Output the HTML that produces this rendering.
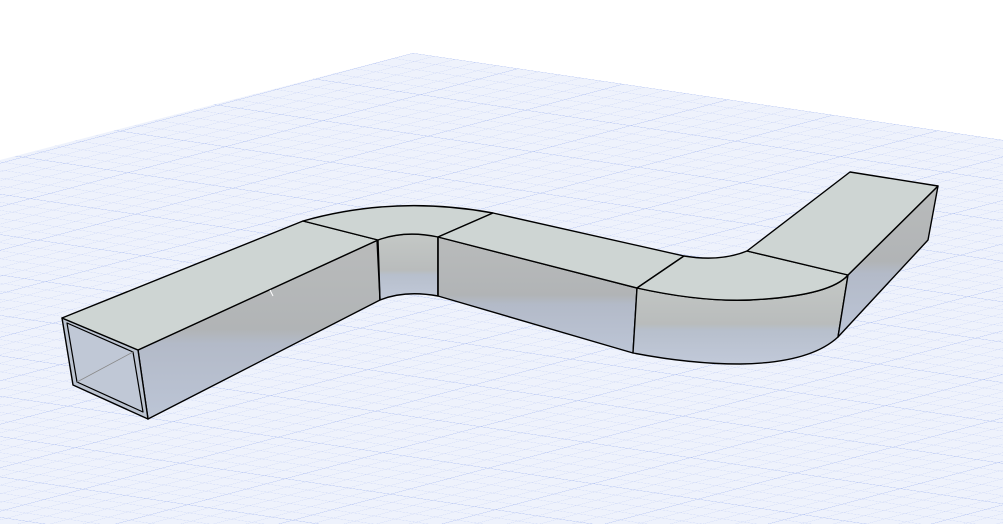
<!DOCTYPE html>
<html><head><meta charset="utf-8"><style>
html,body{margin:0;padding:0;background:#fff;overflow:hidden}
svg{display:block}
</style></head><body>
<svg width="1003" height="524" viewBox="0 0 1003 524" xmlns="http://www.w3.org/2000/svg">
<defs>
<pattern id="minor" width="10" height="10" patternUnits="userSpaceOnUse" patternTransform="matrix(2.1 0.31 -1.95 0.52 413 53)">
<rect width="10" height="10" fill="#eef2fc"/>
<path d="M0 0H10M0 0V10" stroke="#c8d3f5" stroke-width="0.6" fill="none"/>
</pattern>
<pattern id="major" width="50" height="50" patternUnits="userSpaceOnUse" patternTransform="matrix(2.1 0.31 -1.95 0.52 413 53)">
<path d="M0 0H50M0 0V50" stroke="#aabcf0" stroke-width="0.7" fill="none"/>
</pattern>
<linearGradient id="side" x1="0" y1="0" x2="0" y2="1">
<stop offset="0" stop-color="#b9bbbb"/>
<stop offset="0.5" stop-color="#b1b4b6"/>
<stop offset="0.58" stop-color="#b3bac8"/>
<stop offset="1" stop-color="#bcc5d6"/>
</linearGradient>
<linearGradient id="side2" x1="0" y1="0" x2="0" y2="1">
<stop offset="0" stop-color="#c4c8c6"/>
<stop offset="0.55" stop-color="#b9bcbc"/>
<stop offset="0.62" stop-color="#b7bfcc"/>
<stop offset="1" stop-color="#c1c9d9"/>
</linearGradient>
</defs>
<polygon points="0,160 413,53 1003,140 1003,524 0,524" fill="url(#minor)"/>
<polygon points="0,160 413,53 1003,140 1003,524 0,524" fill="url(#major)"/>

<g stroke="#000" stroke-width="1.4" stroke-linejoin="round">
<polygon points="138,350 378,240 380,300 148,419" fill="url(#side)"/>
<path d="M377,240 Q405,230 438,236 L438,296 Q405,290 380,300 Z" fill="url(#side2)"/>
<polygon points="438,237 637,288 633,353 438,296" fill="url(#side)"/>
<path d="M637,288 Q700,302 750,300 Q830,296 848,275 L838,337 Q810,363 740,364 Q690,364 633,353 Z" fill="url(#side2)"/>
<polygon points="848,275 938,186 928,240 838,337" fill="url(#side)"/>
<polygon points="62,318 138,350 148,419 73,385" fill="#bcc4d1"/>
<polygon points="67,323 133,352 143,412 77,382" fill="#c0c8d6" stroke-width="1.2"/>
<path d="M77,382 L133,352" stroke="#888" stroke-width="0.8" fill="none"/>
<polygon points="62,318 303,221 378,240 138,350" fill="#ced5d3"/>
<path d="M303,221 Q395,195 493,213 L438,237 Q405,230 378,240 Z" fill="#ced5d3"/>
<polygon points="493,213 684,256 637,288 438,237" fill="#ced5d3"/>
<path d="M684,256 Q720,262 747,251 L848,275 Q830,296 750,300 Q700,302 637,288 Z" fill="#ced5d3"/>
<polygon points="747,251 850,172 938,186 848,275" fill="#ced5d3"/>
<path d="M378,240 L380,300 M438,237 L438,296" fill="none"/>
</g>
<path d="M270,290 l3,6" stroke="#fff" stroke-width="1"/>
</svg>
</body></html>
